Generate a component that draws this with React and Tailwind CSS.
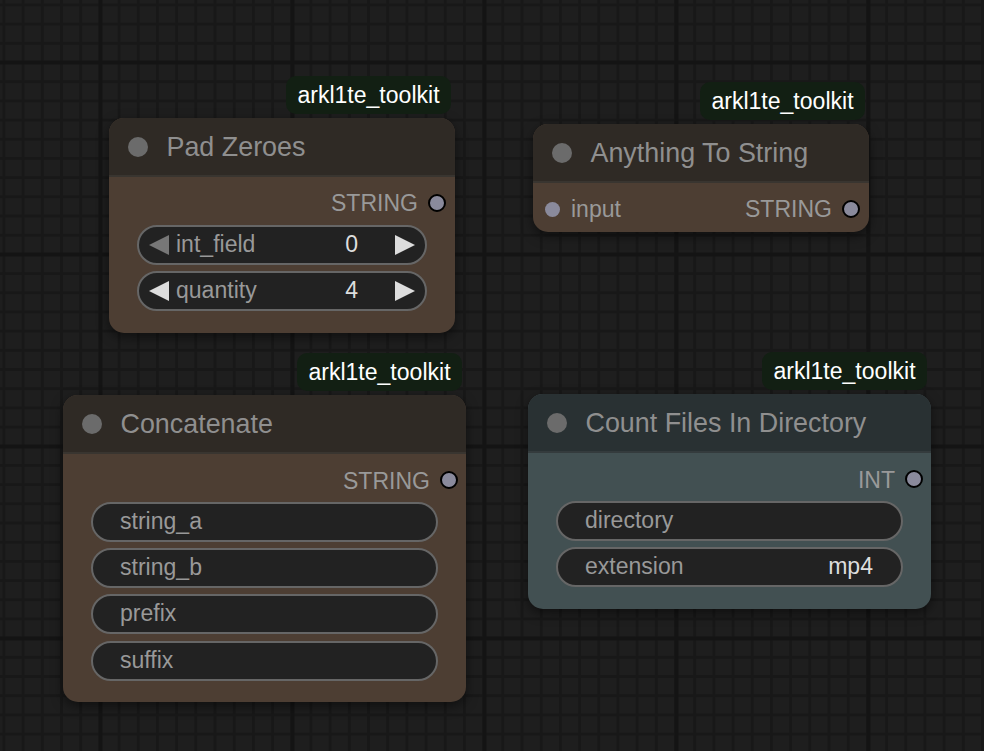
const Arrow = ({ left, dim }) => (
  <svg width="20" height="20" viewBox="0 0 20 20" className={dim ? "fill-[#777]" : "fill-[#ddd]"}>
    <polygon points={left ? "20,0 20,20 0,10" : "0,0 0,20 20,10"} />
  </svg>
);

const OutSlot = ({ label, wide }) => (
  <div className="flex items-center gap-[10px]">
    <span className={wide ? "pt-[3px]" : "pt-[1px]"}>{label}</span>
    <span className="w-[18px] h-[18px] rounded-full bg-[#8a8a9c] border-2 border-black" />
  </div>
);

const NumberWidget = ({ label, value, dim }) => (
  <div className="h-[40px] rounded-full bg-[#222] border-2 border-[#666] flex items-center pl-[10px] pr-[10px]">
    <Arrow left dim={dim} />
    <span className="ml-[7px] text-[#999] pb-[2px]">{label}</span>
    <span className="ml-auto mr-[37px] text-[#ddd] pb-[2px]">{value}</span>
    <Arrow />
  </div>
);

const TextWidget = ({ label, value, className = "" }) => (
  <div className={`h-[40px] rounded-full bg-[#222] border-2 border-[#666] flex items-center justify-between pl-[27px] pr-[28px] pb-[2px] ${className}`}>
    <span className="text-[#999]">{label}</span>
    {value && <span className="text-[#ddd]">{value}</span>}
  </div>
);

const Node = ({ title, className, header, body, children }) => (
  <div className={`absolute rounded-[15px] shadow-[0_4px_12px_rgba(0,0,0,0.5)] ${body} ${className}`}>
    <div className="absolute -top-[42px] right-[4px] h-[38px] w-[165px] rounded-[10px] bg-[#121f13] text-white flex items-center justify-center">
      arkl1te_toolkit
    </div>
    <div className={`h-[59px] rounded-t-[15px] flex items-center pl-[19px] pt-[2px] gap-[19px] text-[26.88px] text-[#8f8f8f] border-b-2 border-white/5 ${header}`}>
      <span className="w-[20px] h-[20px] rounded-full bg-[#6b6b6b] -mt-[2px]" />
      <span className="-ml-[0.5px]">{title}</span>
    </div>
    {children}
  </div>
);

const brownHead = "bg-[#2f2a25]";
const brownBody = "bg-[#4d3e33]";

export default function App() {
  return (
    <div className="relative w-full h-screen overflow-hidden text-[23.04px] text-[#999] font-['Liberation_Sans',Arial,sans-serif] bg-[#1e1e1e] bg-[linear-gradient(#141414_4px,transparent_4px),linear-gradient(90deg,#141414_4px,transparent_4px),linear-gradient(#181818_2.5px,transparent_2.5px),linear-gradient(90deg,#181818_2.5px,transparent_2.5px)] [background-size:192px_192px,192px_192px,19.2px_19.2px,19.2px_19.2px] [background-position:0_60.5px,98.5px_0,0_3.5px,2.5px_0]">
      <Node title="Pad Zeroes" className="left-[109px] top-[118px] w-[346px] h-[215px]" header={brownHead} body={brownBody}>
        <div className="flex flex-col pt-[5px] pl-[28px] pr-[28px]">
          <div className="h-[43px] flex items-center justify-end -mr-[19px] pb-[1px]"><OutSlot label="STRING" /></div>
          <div className="flex flex-col gap-[6px]">
            <NumberWidget label="int_field" value="0" dim />
            <NumberWidget label="quantity" value="4" />
          </div>
        </div>
      </Node>

      <Node title="Anything To String" className="left-[533px] top-[124px] w-[336px] h-[108px]" header={brownHead} body={brownBody}>
        <div className="flex items-center justify-between pl-[12px] pr-[9px] h-[47px] pt-[5px]">
          <div className="flex items-center gap-[11px]">
            <span className="w-[15px] h-[15px] rounded-full bg-[#8a8a9c]" />
            <span className="pt-[1px]">input</span>
          </div>
          <OutSlot label="STRING" />
        </div>
      </Node>

      <Node title="Concatenate" className="left-[63px] top-[395px] w-[403px] h-[307px]" header={brownHead} body={brownBody}>
        <div className="flex flex-col pt-[5px] pl-[28px] pr-[28px]">
          <div className="h-[43px] flex items-center justify-end -mr-[20px] pb-[1px]"><OutSlot label="STRING" wide /></div>
          <div className="flex flex-col gap-[6px]">
            <TextWidget label="string_a" />
            <TextWidget label="string_b" />
            <TextWidget label="prefix" />
            <TextWidget label="suffix" className="mt-[1px]" />
          </div>
        </div>
      </Node>

      <Node title="Count Files In Directory" className="left-[528px] top-[394px] w-[403px] h-[215px]" header="bg-[#293133]" body="bg-[#425052]">
        <div className="flex flex-col pt-[5px] pl-[28px] pr-[28px]">
          <div className="h-[43px] flex items-center justify-end -mr-[20px] pb-[1px]"><OutSlot label="INT" wide /></div>
          <div className="flex flex-col gap-[6px]">
            <TextWidget label="directory" />
            <TextWidget label="extension" value="mp4" />
          </div>
        </div>
      </Node>
    </div>
  );
}
